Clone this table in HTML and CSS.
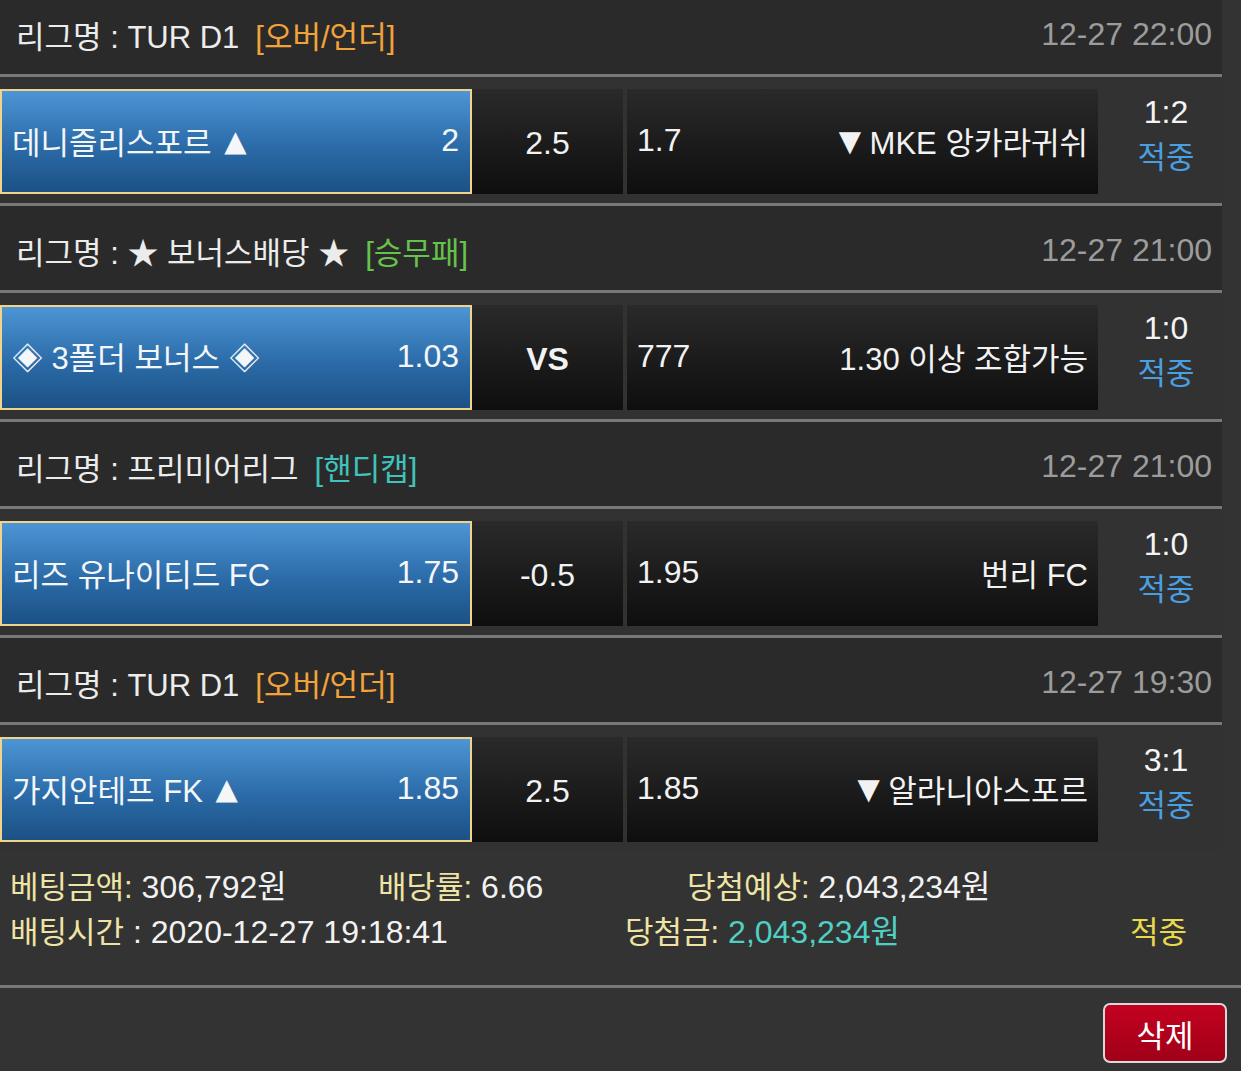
FILE: index.html
```html
<!DOCTYPE html>
<html lang="ko">
<head>
    <meta charset="UTF-8">
    <title>베팅내역</title>
    <link rel="stylesheet" href="styles.css">
</head>
<body>

    <div class="page">
        <!-- Bet slip games -->
        <div class="slip">

            <div class="game">
                <div class="league">
                    <span class="league-name">리그명 : TUR D1</span>
                    <span class="tag tag-ou">[오버/언더]</span>
                    <span class="time">12-27 22:00</span>
                </div>
                <div class="match">
                    <div class="pick"><span>데니즐리스포르 <span class="arrow">▲</span></span><span class="num">2</span></div>
                    <div class="cell line num">2.5</div>
                    <div class="cell away"><span class="num">1.7</span><span><span class="arrow">▼</span> MKE 앙카라귀쉬</span></div>
                    <div class="result"><span class="score">1:2</span><span class="hit">적중</span></div>
                </div>
            </div>

            <div class="game">
                <div class="league">
                    <span class="league-name">리그명 : ★ 보너스배당 ★</span>
                    <span class="tag tag-wdl">[승무패]</span>
                    <span class="time">12-27 21:00</span>
                </div>
                <div class="match">
                    <div class="pick"><span>◈ 3폴더 보너스 ◈</span><span class="num">1.03</span></div>
                    <div class="cell line vs">VS</div>
                    <div class="cell away"><span class="num">777</span><span>1.30 이상 조합가능</span></div>
                    <div class="result"><span class="score">1:0</span><span class="hit">적중</span></div>
                </div>
            </div>

            <div class="game">
                <div class="league">
                    <span class="league-name">리그명 : 프리미어리그</span>
                    <span class="tag tag-hc">[핸디캡]</span>
                    <span class="time">12-27 21:00</span>
                </div>
                <div class="match">
                    <div class="pick"><span>리즈 유나이티드 FC</span><span class="num">1.75</span></div>
                    <div class="cell line num">-0.5</div>
                    <div class="cell away"><span class="num">1.95</span><span>번리 FC</span></div>
                    <div class="result"><span class="score">1:0</span><span class="hit">적중</span></div>
                </div>
            </div>

            <div class="game last">
                <div class="league">
                    <span class="league-name">리그명 : TUR D1</span>
                    <span class="tag tag-ou">[오버/언더]</span>
                    <span class="time">12-27 19:30</span>
                </div>
                <div class="match">
                    <div class="pick"><span>가지안테프 FK <span class="arrow">▲</span></span><span class="num">1.85</span></div>
                    <div class="cell line num">2.5</div>
                    <div class="cell away"><span class="num">1.85</span><span><span class="arrow">▼</span> 알라니아스포르</span></div>
                    <div class="result"><span class="score">3:1</span><span class="hit">적중</span></div>
                </div>
            </div>

        </div>

        <!-- Summary -->
        <div class="summary">
            <div class="sum-row">
                <div class="sum-amount"><span class="label">베팅금액:</span> 306,792원</div>
                <div class="sum-rate"><span class="label">배당률:</span> 6.66</div>
                <div><span class="label">당첨예상:</span> 2,043,234원</div>
            </div>
            <div class="sum-row">
                <div class="sum-time"><span class="label">배팅시간</span> : 2020-12-27 19:18:41</div>
                <div class="sum-win"><span class="label">당첨금:</span> <span class="win">2,043,234원</span></div>
                <div class="status">적중</div>
            </div>
        </div>

        <div class="actions">
            <button class="btn-delete">삭제</button>
        </div>
    </div>

</body>
</html>
```

FILE: styles.css
```css
/* General */
body {
    margin: 0;
    background: #333333;
    color: #f2f2f2;
    font-family: "Liberation Sans", "Noto Sans CJK KR", sans-serif;
    font-size: 31px;
}

.page {
    width: 1241px;
    overflow: hidden;
}

.num {
    font-size: 32px;
}

.arrow {
    font-family: "DejaVu Sans", sans-serif;
    font-size: 29px;
    vertical-align: 3px;
    margin-left: 4px;
}

/* Games list */
.slip {
    width: 1222px;
    margin-top: -10px;
}

.league {
    height: 87px;
    box-sizing: border-box;
    display: flex;
    align-items: center;
    padding: 5px 10px 0 16px;
    background: #2a2a2a;
    border-bottom: 3px solid #787878;
    white-space: nowrap;
}

.league-name {
    color: #ececec;
    margin-right: 16px;
}

.tag-ou { color: #f2a23a; }
.tag-wdl { color: #66c24a; }
.tag-hc { color: #3fc3bc; }

.time {
    margin-left: auto;
    color: #9c9c9c;
    font-size: 32px;
}

/* Match row */
.match {
    display: flex;
    height: 129px;
    box-sizing: border-box;
    padding: 12px 0 9px;
    background: #323232;
    border-bottom: 3px solid #787878;
    white-space: nowrap;
}

.game.last .match {
    border-bottom: none;
    height: 126px;
}

.pick {
    width: 472px;
    box-sizing: border-box;
    display: flex;
    justify-content: space-between;
    align-items: center;
    padding: 0 11px 3px 10px;
    border: 2px solid #f1d48c;
    background: linear-gradient(#4d95d5, #2b6ba8 55%, #1b5185);
    color: #f4f6f8;
}

.cell {
    display: flex;
    align-items: center;
    background: linear-gradient(#2a2a2a, #0e0e0e);
    color: #f2f2f2;
}

.cell.line {
    width: 151px;
    justify-content: center;
    padding-top: 4px;
    box-sizing: border-box;
}

.cell.vs {
    font-weight: bold;
    font-size: 32px;
}

.cell.away {
    width: 471px;
    box-sizing: border-box;
    margin-left: 4px;
    padding: 0 10px 3px;
    justify-content: space-between;
}

.result {
    flex: 1;
    display: flex;
    flex-direction: column;
    align-items: center;
    padding-left: 12px;
    line-height: 46px;
}

.score {
    font-size: 32px;
    color: #f4f4f4;
}

.hit {
    color: #4a9fe2;
}

/* Summary */
.summary {
    padding: 14px 0 30px 10px;
    border-bottom: 3px solid #787878;
    font-size: 32px;
    line-height: 45px;
    white-space: nowrap;
}

.sum-row {
    display: flex;
}

.sum-amount { width: 368px; }
.sum-rate { width: 309px; }
.sum-time { width: 615px; }
.sum-win { width: 505px; }

.label {
    color: #eee4a6;
    font-size: 31px;
}

.win {
    color: #4fd0c4;
}

.status {
    color: #e9d94a;
    font-size: 31px;
}

/* Buttons */
.actions {
    display: flex;
    justify-content: flex-end;
    padding: 15px 14px 0 0;
}

.btn-delete {
    width: 124px;
    height: 60px;
    border: 2px solid #d9d9d9;
    border-radius: 7px;
    background: linear-gradient(#c3021f, #a00019);
    color: #ffffff;
    font-family: "Liberation Sans", "Noto Sans CJK KR", sans-serif;
    font-size: 31px;
    cursor: pointer;
}
```
